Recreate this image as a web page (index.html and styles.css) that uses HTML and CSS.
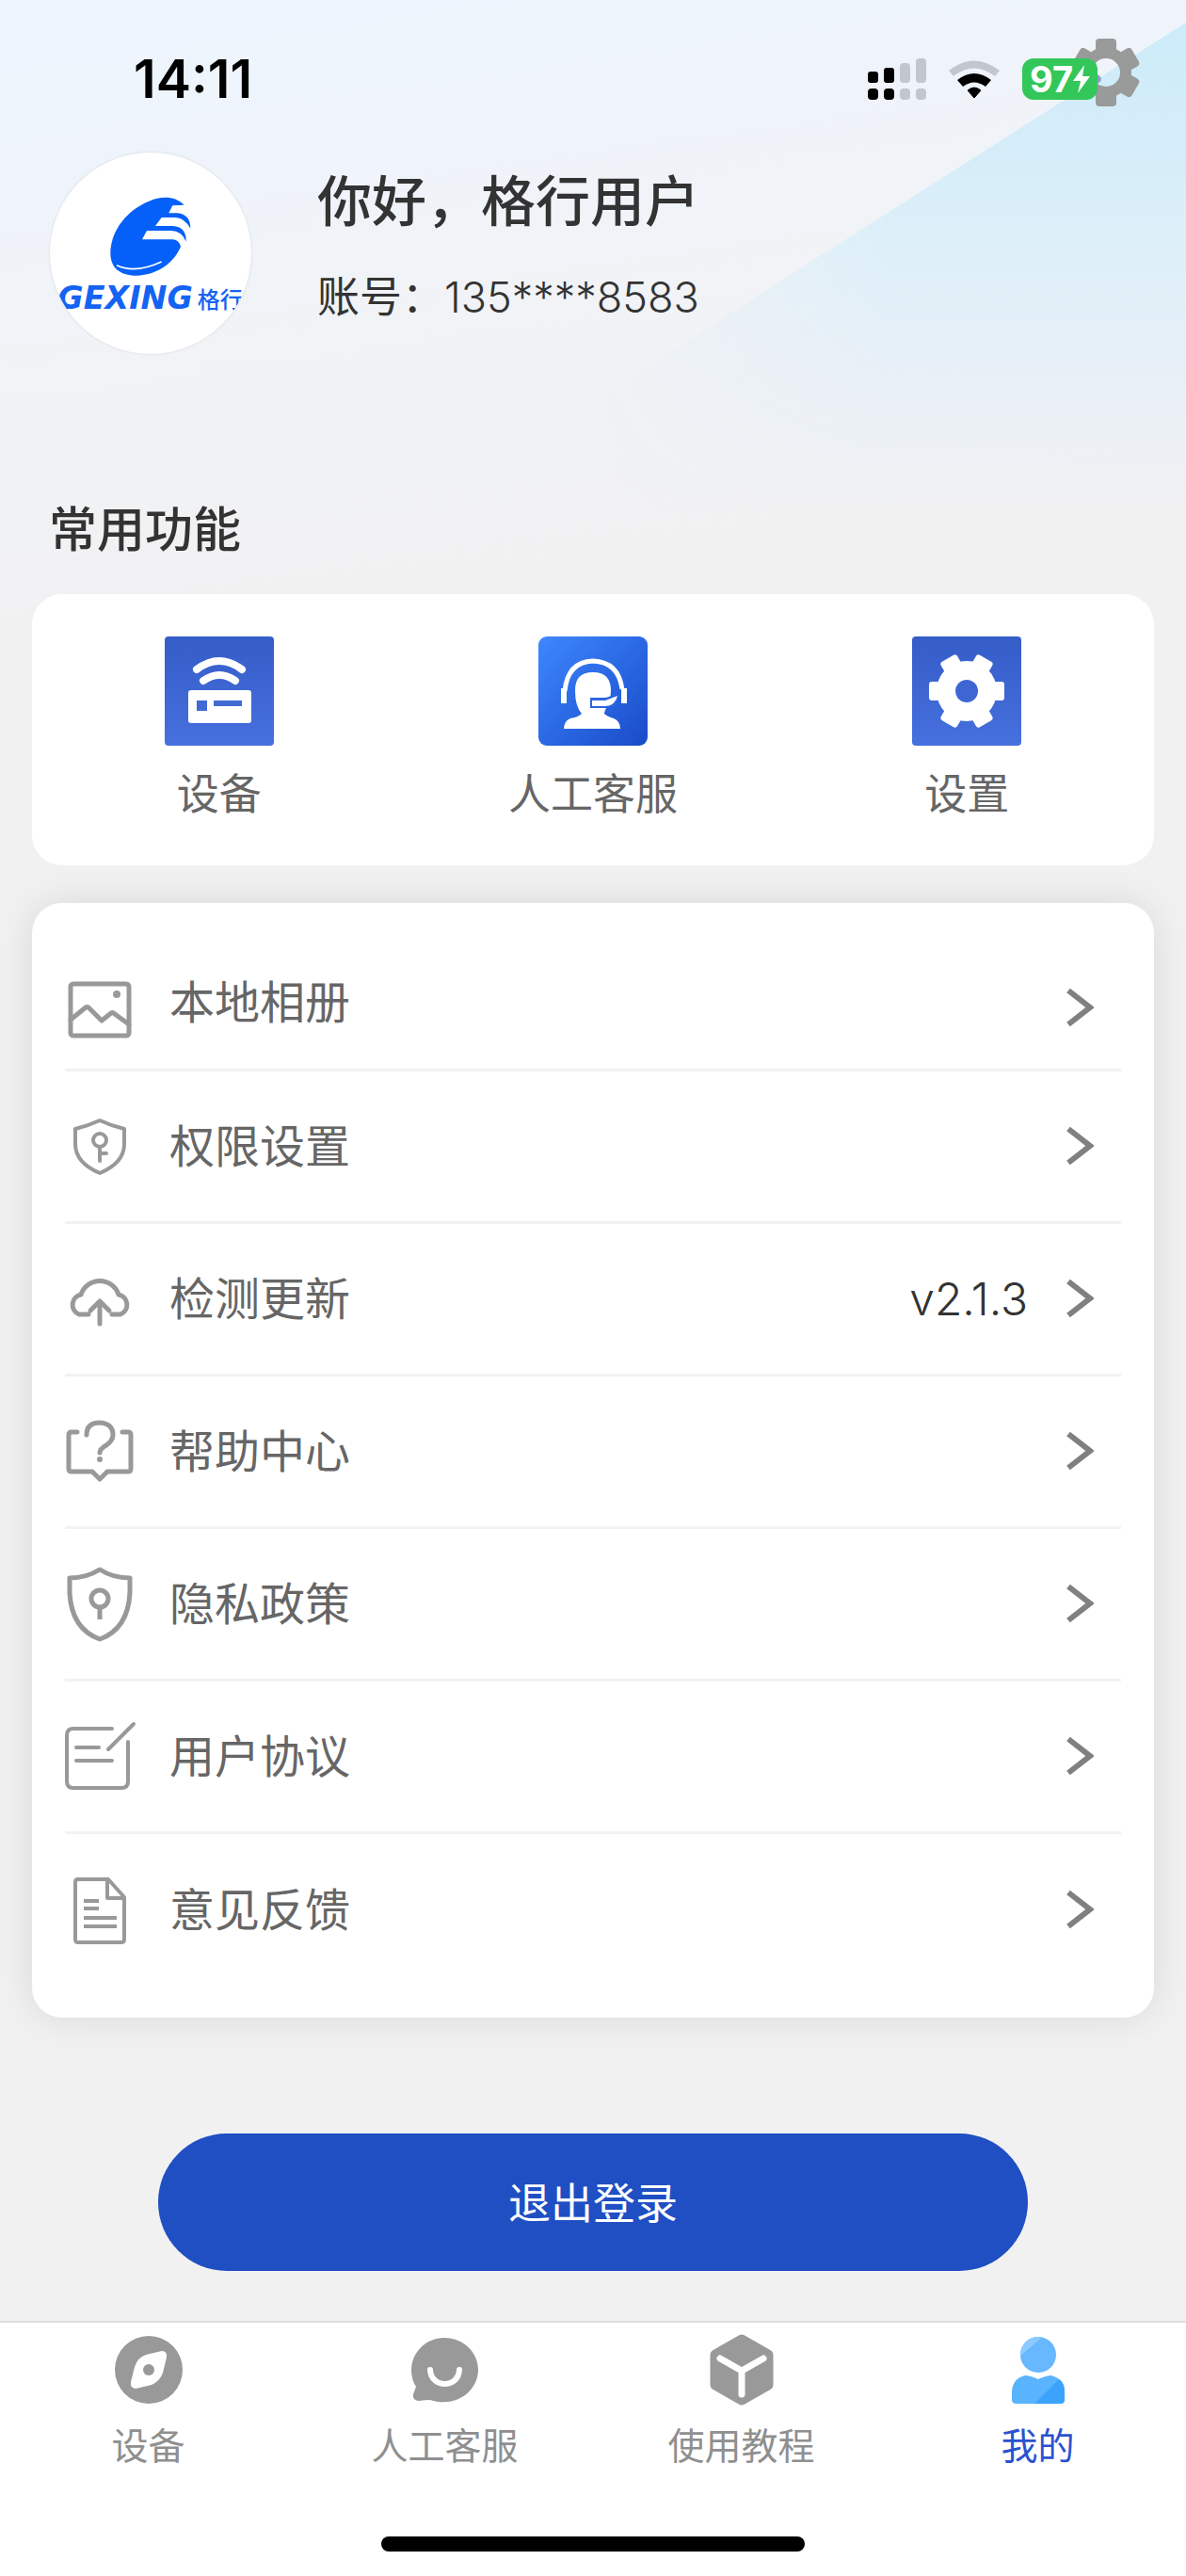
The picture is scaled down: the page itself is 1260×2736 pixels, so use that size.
FILE: index.html
```html
<!DOCTYPE html>
<html lang="zh-CN">
  <head>
    <meta charset="UTF-8" />
    <meta name="viewport" content="width=device-width, initial-scale=1.0" />
    <title>我的</title>
    <link rel="stylesheet" href="styles.css">
  </head>
  <body>
    <div class="app">
      <div class="status-bar">
        <span class="status-time">14:11</span>
        <div class="status-icons">
          <svg width="62" height="44" viewBox="0 0 62 44">
            <g fill="#000">
              <rect x="0" y="14" width="11" height="12" rx="3" />
              <rect x="17" y="10" width="11" height="16" rx="3" />
              <rect x="0" y="32" width="11" height="12" rx="4" />
              <rect x="17" y="32" width="11" height="12" rx="4" />
            </g>
            <g fill="#c3c6cd">
              <rect x="34" y="5" width="11" height="21" rx="4" />
              <rect x="51" y="0" width="11" height="26" rx="4" />
              <rect x="34" y="32" width="11" height="12" rx="4" />
              <rect x="51" y="32" width="11" height="12" rx="4" />
            </g>
          </svg>
          <svg width="54" height="44" viewBox="0 0 54 44">
            <path d="M0 13 Q27 -8 54 13 L49 19 Q27 2 5 19Z" fill="#c3c6cd" />
            <path d="M9 23 Q27 9 45 23 L39 30 Q27 21 15 30Z" fill="#000" />
            <path d="M20 34 Q27 28 34 34 L27 42Z" fill="#000" stroke="#000" stroke-width="1" stroke-linejoin="round" />
          </svg>
          <div class="battery">
            <span>97</span>
            <svg width="18" height="30" viewBox="0 0 18 30"><path d="M12 0 L0 17 H8 L5 30 L18 12 H10Z" fill="#fff" /></svg>
          </div>
        </div>
      </div>

      <button class="gear-button" aria-label="设置">
        <svg width="72" height="72" viewBox="-36 -36 72 72">
          <mask id="gear-hole">
            <rect x="-36" y="-36" width="72" height="72" fill="#fff" />
            <circle r="15" fill="#000" />
          </mask>
          <g fill="#999b9a" mask="url(#gear-hole)">
            <circle r="27" />
            <rect x="-11" y="-36" width="22" height="72" rx="4" />
            <rect x="-11" y="-36" width="22" height="72" rx="4" transform="rotate(60)" />
            <rect x="-11" y="-36" width="22" height="72" rx="4" transform="rotate(120)" />
          </g>
          <path d="M-9 2 Q-1 7 -9 12Z" fill="#8f9dc8" />
        </svg>
      </button>

      <main class="content">
        <section class="profile">
          <div class="avatar">
            <svg viewBox="69 65 642 642">
              <g fill="#0560fa">
                <path d="M497 232 C465 200 420 205 385 220 C310 250 262 320 262 385 C262 430 290 457 345 457 C415 455 465 415 486 365 Q480 343 460 342 H363 L378 314 L405 299 L425 272 L448 258 L460 234Z" />
                <path d="M442 258 H475 Q517 262 517 307 Q500 275 470 272 H420Z" />
                <path d="M400 299 H460 Q505 302 503 349 Q490 315 455 314 H374Z" />
              </g>
              <path d="M282 424 Q340 452 425 413" fill="none" stroke="#fff" stroke-width="5" />
              <text class="logo-latin" x="94" y="564">GEXING</text>
              <text class="logo-cjk" x="539" y="559">格行</text>
            </svg>
          </div>
          <div class="profile-text">
            <h1 class="profile-name">你好，格行用户</h1>
            <p class="profile-account">账号：<span class="account-number">135****8583</span></p>
          </div>
        </section>

        <h2 class="section-title">常用功能</h2>

        <!-- Shortcuts -->
        <nav class="card shortcuts">
          <a class="shortcut" href="#device">
            <svg width="116" height="116" viewBox="0 0 116 116">
              <defs>
                <linearGradient id="tile" x1="0" y1="0" x2="0" y2="1">
                  <stop offset="0" stop-color="#355dc8" />
                  <stop offset="1" stop-color="#4670de" />
                </linearGradient>
              </defs>
              <rect width="116" height="116" rx="4" fill="url(#tile)" />
              <path d="M34 35 Q58 17 82 35" fill="none" stroke="#fff" stroke-width="8" stroke-linecap="round" />
              <path d="M41 47 Q58 35 75 47" fill="none" stroke="#fff" stroke-width="8" stroke-linecap="round" />
              <rect x="25" y="57" width="67" height="35" rx="3" fill="#fff" />
              <rect x="34" y="68" width="11" height="11" fill="#416ad4" />
              <rect x="52" y="68" width="30" height="6" fill="#416ad4" />
            </svg>
            <span>设备</span>
          </a>
          <a class="shortcut" href="#service">
            <svg width="116" height="116" viewBox="0 0 116 116">
              <defs>
                <linearGradient id="tile-bright" x1="0" y1="0" x2="1" y2="1">
                  <stop offset="0" stop-color="#3e88fe" />
                  <stop offset="0.5" stop-color="#2b69e4" />
                  <stop offset="1" stop-color="#1a4bc8" />
                </linearGradient>
              </defs>
              <rect width="116" height="116" rx="9" fill="url(#tile-bright)" />
              <path d="M28 58 Q31 27 58 26 Q85 27 89 56" fill="none" stroke="#fff" stroke-width="5" />
              <path d="M27 55 V71 M91 55 V71" stroke="#fff" stroke-width="6" />
              <path d="M39 58 C39 44 45 38 58 38 C71 38 77 45 77 57 Q77 62 76 65 L57 66 V75 L72 76 Q70 80 70 82 Q73 85 80 87 Q87 90 87 98 H27 Q27 90 34 87 Q42 86 46 82 Q39 74 39 58Z" fill="#fff" />
              <path d="M57 75 V68 H71 Q79 65 84 63 Q81 75 73 75Z" fill="#fff" />
              <path d="M83 61 Q76 65 71 66 H56 V75 H71 Q80 75 83 68" fill="none" stroke="#2b66e0" stroke-width="2" />
            </svg>
            <span>人工客服</span>
          </a>
          <a class="shortcut" href="#settings">
            <svg width="116" height="116" viewBox="-58 -58 116 116">
              <rect x="-58" y="-58" width="116" height="116" rx="4" fill="url(#tile)" />
              <g fill="#fff">
                <circle r="32" />
                <rect x="-40" y="-10" width="80" height="20" rx="3" />
                <rect x="-40" y="-10" width="80" height="20" rx="3" transform="rotate(60)" />
                <rect x="-40" y="-10" width="80" height="20" rx="3" transform="rotate(120)" />
              </g>
              <circle r="12" fill="#3e66d3" />
            </svg>
            <span>设置</span>
          </a>
        </nav>

        <!-- Menu list -->
        <nav class="card menu">
          <a class="menu-item" href="#album">
            <svg class="menu-icon" viewBox="0 0 74 74">
              <rect x="6" y="11" width="62" height="55" rx="3" />
              <path d="M6 49 L22 36 Q23 35 25 36 L39 50 L49 42 Q51 41 53 43 L68 54" />
              <circle class="solid" cx="55" cy="22" r="4" />
            </svg>
            <span class="menu-label">本地相册</span>
            <svg class="chevron" viewBox="0 0 30 80"><path d="M3 21 L26 39 L3 57" /></svg>
          </a>
          <a class="menu-item" href="#permission">
            <svg class="menu-icon thin" viewBox="0 0 74 74">
              <path d="M37 9 Q50 15 63 18 V34 Q63 54 37 65 Q11 54 11 34 V18 Q24 15 37 9Z" />
              <circle cx="37" cy="30" r="7" />
              <path d="M37 37 V52 M37 44 H44" />
            </svg>
            <span class="menu-label">权限设置</span>
            <svg class="chevron" viewBox="0 0 30 80"><path d="M3 21 L26 39 L3 57" /></svg>
          </a>
          <a class="menu-item" href="#update">
            <svg class="menu-icon" viewBox="0 0 74 74">
              <path d="M25 53 H15 A11 11 0 0 1 17 32 A21 21 0 0 1 57 32 A11 11 0 0 1 59 53 H50 M37 63 V40 M27 49 L37 39 L47 49" />
            </svg>
            <span class="menu-label">检测更新</span>
            <span class="menu-value">v2.1.3</span>
            <svg class="chevron" viewBox="0 0 30 80"><path d="M3 21 L26 39 L3 57" /></svg>
          </a>
          <a class="menu-item" href="#help">
            <svg class="menu-icon" viewBox="0 0 74 74">
              <path d="M13 16 H7 Q4 16 4 19 V55 Q4 58 7 58 H29 L37 66 L45 58 H67 Q70 58 70 55 V19 Q70 16 67 16 H61" />
              <path d="M23 19 Q23 6 37 6 Q51 7 51 19 Q51 25 44 30 Q37 34 37 38" />
              <circle class="solid" cx="37" cy="45" r="3" />
            </svg>
            <span class="menu-label">帮助中心</span>
            <svg class="chevron" viewBox="0 0 30 80"><path d="M3 21 L26 39 L3 57" /></svg>
          </a>
          <a class="menu-item" href="#privacy">
            <svg class="menu-icon" viewBox="0 0 74 80">
              <path d="M37 3 Q51 12 69 12 V28 Q67 66 37 77 Q7 66 5 28 V12 Q23 12 37 3Z" />
              <circle cx="37" cy="34" r="9" />
              <path d="M37 43 V56" stroke-linecap="butt" />
            </svg>
            <span class="menu-label">隐私政策</span>
            <svg class="chevron" viewBox="0 0 30 80"><path d="M3 21 L26 39 L3 57" /></svg>
          </a>
          <a class="menu-item" href="#agreement">
            <svg class="menu-icon thin" viewBox="0 0 74 74">
              <path d="M50 7 H9 Q2 7 2 14 V63 Q2 70 9 70 H60 Q67 70 67 63 V21 M73 2 L46 29 M12 27 H36 M12 41 H50" />
            </svg>
            <span class="menu-label">用户协议</span>
            <svg class="chevron" viewBox="0 0 30 80"><path d="M3 21 L26 39 L3 57" /></svg>
          </a>
          <a class="menu-item" href="#feedback">
            <svg class="menu-icon thin" viewBox="0 0 74 74">
              <path d="M13 4 H46 L63 23 V68 Q63 71 60 71 H14 Q11 71 11 68 V7 Q11 4 14 4Z M45 5 V24 H63 M20 27 H36 M20 35 H36 M20 45 H55 M20 54 H55" stroke-linecap="butt" />
            </svg>
            <span class="menu-label">意见反馈</span>
            <svg class="chevron" viewBox="0 0 30 80"><path d="M3 21 L26 39 L3 57" /></svg>
          </a>
        </nav>

        <button class="logout">退出登录</button>
      </main>

      <footer class="tab-bar">
        <nav class="tabs">
          <a class="tab" href="#device">
            <svg width="76" height="76" viewBox="0 0 76 76">
              <circle cx="38" cy="38" r="36" fill="#999" />
              <path d="M35 22 L52 18 Q58 18 57 25 L53 41 Q50 50 41 54 L24 58 Q18 57 19 51 L23 35 Q26 25 35 22Z" fill="#fff" />
              <circle cx="38" cy="38" r="6" fill="#999" />
            </svg>
            <span>设备</span>
          </a>
          <a class="tab" href="#service">
            <svg width="76" height="76" viewBox="0 0 76 76">
              <path d="M37 4 C57 4 73 19 73 38 C73 60 50 79 22 70 Q16 70 10 71 Q3 70 4 64 L7 56 Q2 48 2 39 C2 19 18 4 37 4Z" fill="#999" />
              <path d="M22 38 C23 58 52 58 53 38" fill="none" stroke="#fff" stroke-width="6" stroke-linecap="round" />
            </svg>
            <span>人工客服</span>
          </a>
          <a class="tab" href="#guide">
            <svg width="76" height="76" viewBox="0 0 76 76">
              <path d="M38 6 L66 22 V54 L38 70 L10 54 V22Z" fill="#999" stroke="#999" stroke-width="11" stroke-linejoin="round" />
              <path d="M15 26 L38 39 L61 26 M38 39 V64" fill="none" stroke="#fff" stroke-width="7" stroke-linecap="round" />
            </svg>
            <span>使用教程</span>
          </a>
          <a class="tab active" href="#mine">
            <svg width="76" height="76" viewBox="0 0 76 76">
              <defs>
                <clipPath id="head"><circle cx="38" cy="22" r="19" /></clipPath>
                <clipPath id="torso"><path d="M24 44 Q29 44 38 48 Q47 44 52 44 Q66 48 66 61 V70 Q66 74 61 74 H15 Q10 74 10 70 V61 Q11 47 24 44Z" /></clipPath>
              </defs>
              <g clip-path="url(#head)">
                <rect width="76" height="42" fill="#67b8fe" />
                <path d="M0 0 H46 L10 31Z" fill="#8ccaff" />
              </g>
              <g clip-path="url(#torso)">
                <rect y="42" width="76" height="34" fill="#5ab3fd" />
                <path d="M62 46 L32 76 H76 V46Z" fill="#3ca3fc" />
              </g>
            </svg>
            <span>我的</span>
          </a>
        </nav>
        <div class="home-indicator"></div>
      </footer>
    </div>
  </body>
</html>
```

FILE: styles.css
```css
* {
  box-sizing: border-box;
}

body {
  margin: 0;
  font-family: Inter, 'Noto Sans CJK SC', sans-serif;
  color: #333;
  background-color: #f1f1f2;
}

h1, h2, p {
  margin: 0;
}

a {
  color: inherit;
  text-decoration: none;
}

svg {
  display: block;
  flex-shrink: 0;
}

.app {
  position: relative;
  display: flex;
  flex-direction: column;
  min-height: 100vh;
  background: linear-gradient(172deg, #edf5fe 0, #eff4fb 200px, #f1f3f6 400px, #f1f1f2 700px);
}

/* Diagonal light beam behind the header */
.app::before {
  content: '';
  position: absolute;
  top: 0;
  right: 0;
  width: 640px;
  height: 560px;
  background: linear-gradient(to bottom, #cbebf9 0, #d8eef9 200px, rgba(228, 239, 248, 0.8) 380px, rgba(241, 241, 242, 0) 540px);
  clip-path: polygon(100% 24px, 100% 100%, 0 100%, 0 432px);
  -webkit-mask-image: linear-gradient(to left, #000 50%, transparent);
  mask-image: linear-gradient(to left, #000 50%, transparent);
}

/* Status bar */
.status-bar {
  position: relative;
  z-index: 2;
  display: flex;
  justify-content: space-between;
  height: 162px;
  padding: 54px 94px 0 142px;
}

.status-time {
  font-size: 56px;
  line-height: 60px;
  font-weight: 600;
  color: #000;
}

.status-icons {
  display: flex;
  align-items: center;
  gap: 24px;
  height: 60px;
}

.battery {
  display: flex;
  align-items: center;
  justify-content: center;
  width: 80px;
  height: 44px;
  border-radius: 12px;
  background-color: #33c759;
  color: #fff;
  font-size: 38px;
  font-weight: 700;
}

.gear-button {
  position: absolute;
  top: 41px;
  right: 49px;
  z-index: 1;
  padding: 0;
  border: 0;
  background: none;
}

.content {
  position: relative;
  display: flex;
  flex: 1;
  flex-direction: column;
  padding: 0 34px;
}

/* Profile */
.profile {
  display: flex;
  gap: 70px;
  padding: 0 19px;
}

.avatar {
  width: 214px;
  height: 214px;
  border-radius: 50%;
  overflow: hidden;
  background-color: #fff;
  box-shadow: 0 0 3px rgba(0, 0, 0, 0.12);
}

.logo-latin {
  font: italic bold 100px 'DejaVu Sans', sans-serif;
  fill: #1463f3;
}

.logo-cjk {
  font: 500 72px 'Noto Sans CJK SC', sans-serif;
  fill: #1463f3;
}

.profile-text {
  display: flex;
  flex-direction: column;
  gap: 32px;
  padding-top: 12px;
}

.profile-name {
  font-size: 58px;
  line-height: 80px;
  font-weight: 500;
}

.profile-account {
  font-size: 45px;
  line-height: 60px;
}

.account-number {
  font-weight: 300;
}

.section-title {
  margin: 152px 0 33px;
  padding: 0 18px;
  font-size: 51px;
  line-height: 70px;
  font-weight: 500;
}

.card {
  border-radius: 32px;
  background-color: #fff;
}

.shortcuts {
  display: flex;
  padding: 45px 0;
}

.shortcut {
  display: flex;
  flex: 1;
  flex-direction: column;
  align-items: center;
  gap: 22px;
  font-size: 45px;
  line-height: 60px;
  color: #666;
}

/* Menu */
.menu {
  margin-top: 40px;
  padding: 33px 35px;
  box-shadow: 0 0 40px rgba(0, 0, 0, 0.1);
}

.menu-item {
  display: flex;
  align-items: center;
  height: 162px;
  padding-right: 29px;
  border-bottom: 3px solid #f2f2f2;
  font-size: 48px;
  line-height: 92px;
}

.menu-item:first-child {
  align-items: flex-end;
  height: 146px;
  padding-bottom: 24px;
}

.menu-item:last-child {
  border-bottom: 0;
}

.menu-icon {
  width: 74px;
  height: 80px;
  fill: none;
  stroke: #999;
  stroke-width: 5;
  stroke-linecap: round;
  stroke-linejoin: round;
  overflow: visible;
}

.menu-icon.thin {
  stroke-width: 4;
}

.menu-icon .solid {
  fill: #999;
  stroke: none;
}

.menu-label {
  flex: 1;
  padding-left: 37px;
  color: #666;
}

.menu-value {
  margin-right: 40px;
  font-weight: 300;
}

.chevron {
  width: 30px;
  height: 80px;
  fill: none;
  stroke: #808080;
  stroke-width: 6;
}

.logout {
  height: 146px;
  margin: 123px 134px 53px;
  padding: 0 0 4px;
  border: 0;
  border-radius: 73px;
  background-color: #1f4fc3;
  color: #fff;
  font-family: inherit;
  font-size: 45px;
}

/* Bottom tabs */
.tab-bar {
  position: relative;
  border-top: 2px solid #dedede;
  padding: 12px 0 27px;
  background-color: #fff;
}

.tabs {
  display: flex;
}

.tab {
  display: flex;
  flex: 1;
  flex-direction: column;
  align-items: center;
  gap: 18px;
  font-size: 39px;
  line-height: 50px;
  color: #8f8f8f;
}

.tab.active {
  color: #2a52d0;
}

.home-indicator {
  width: 450px;
  height: 16px;
  margin: 71px auto 0;
  border-radius: 8px;
  background-color: #000;
}
```
